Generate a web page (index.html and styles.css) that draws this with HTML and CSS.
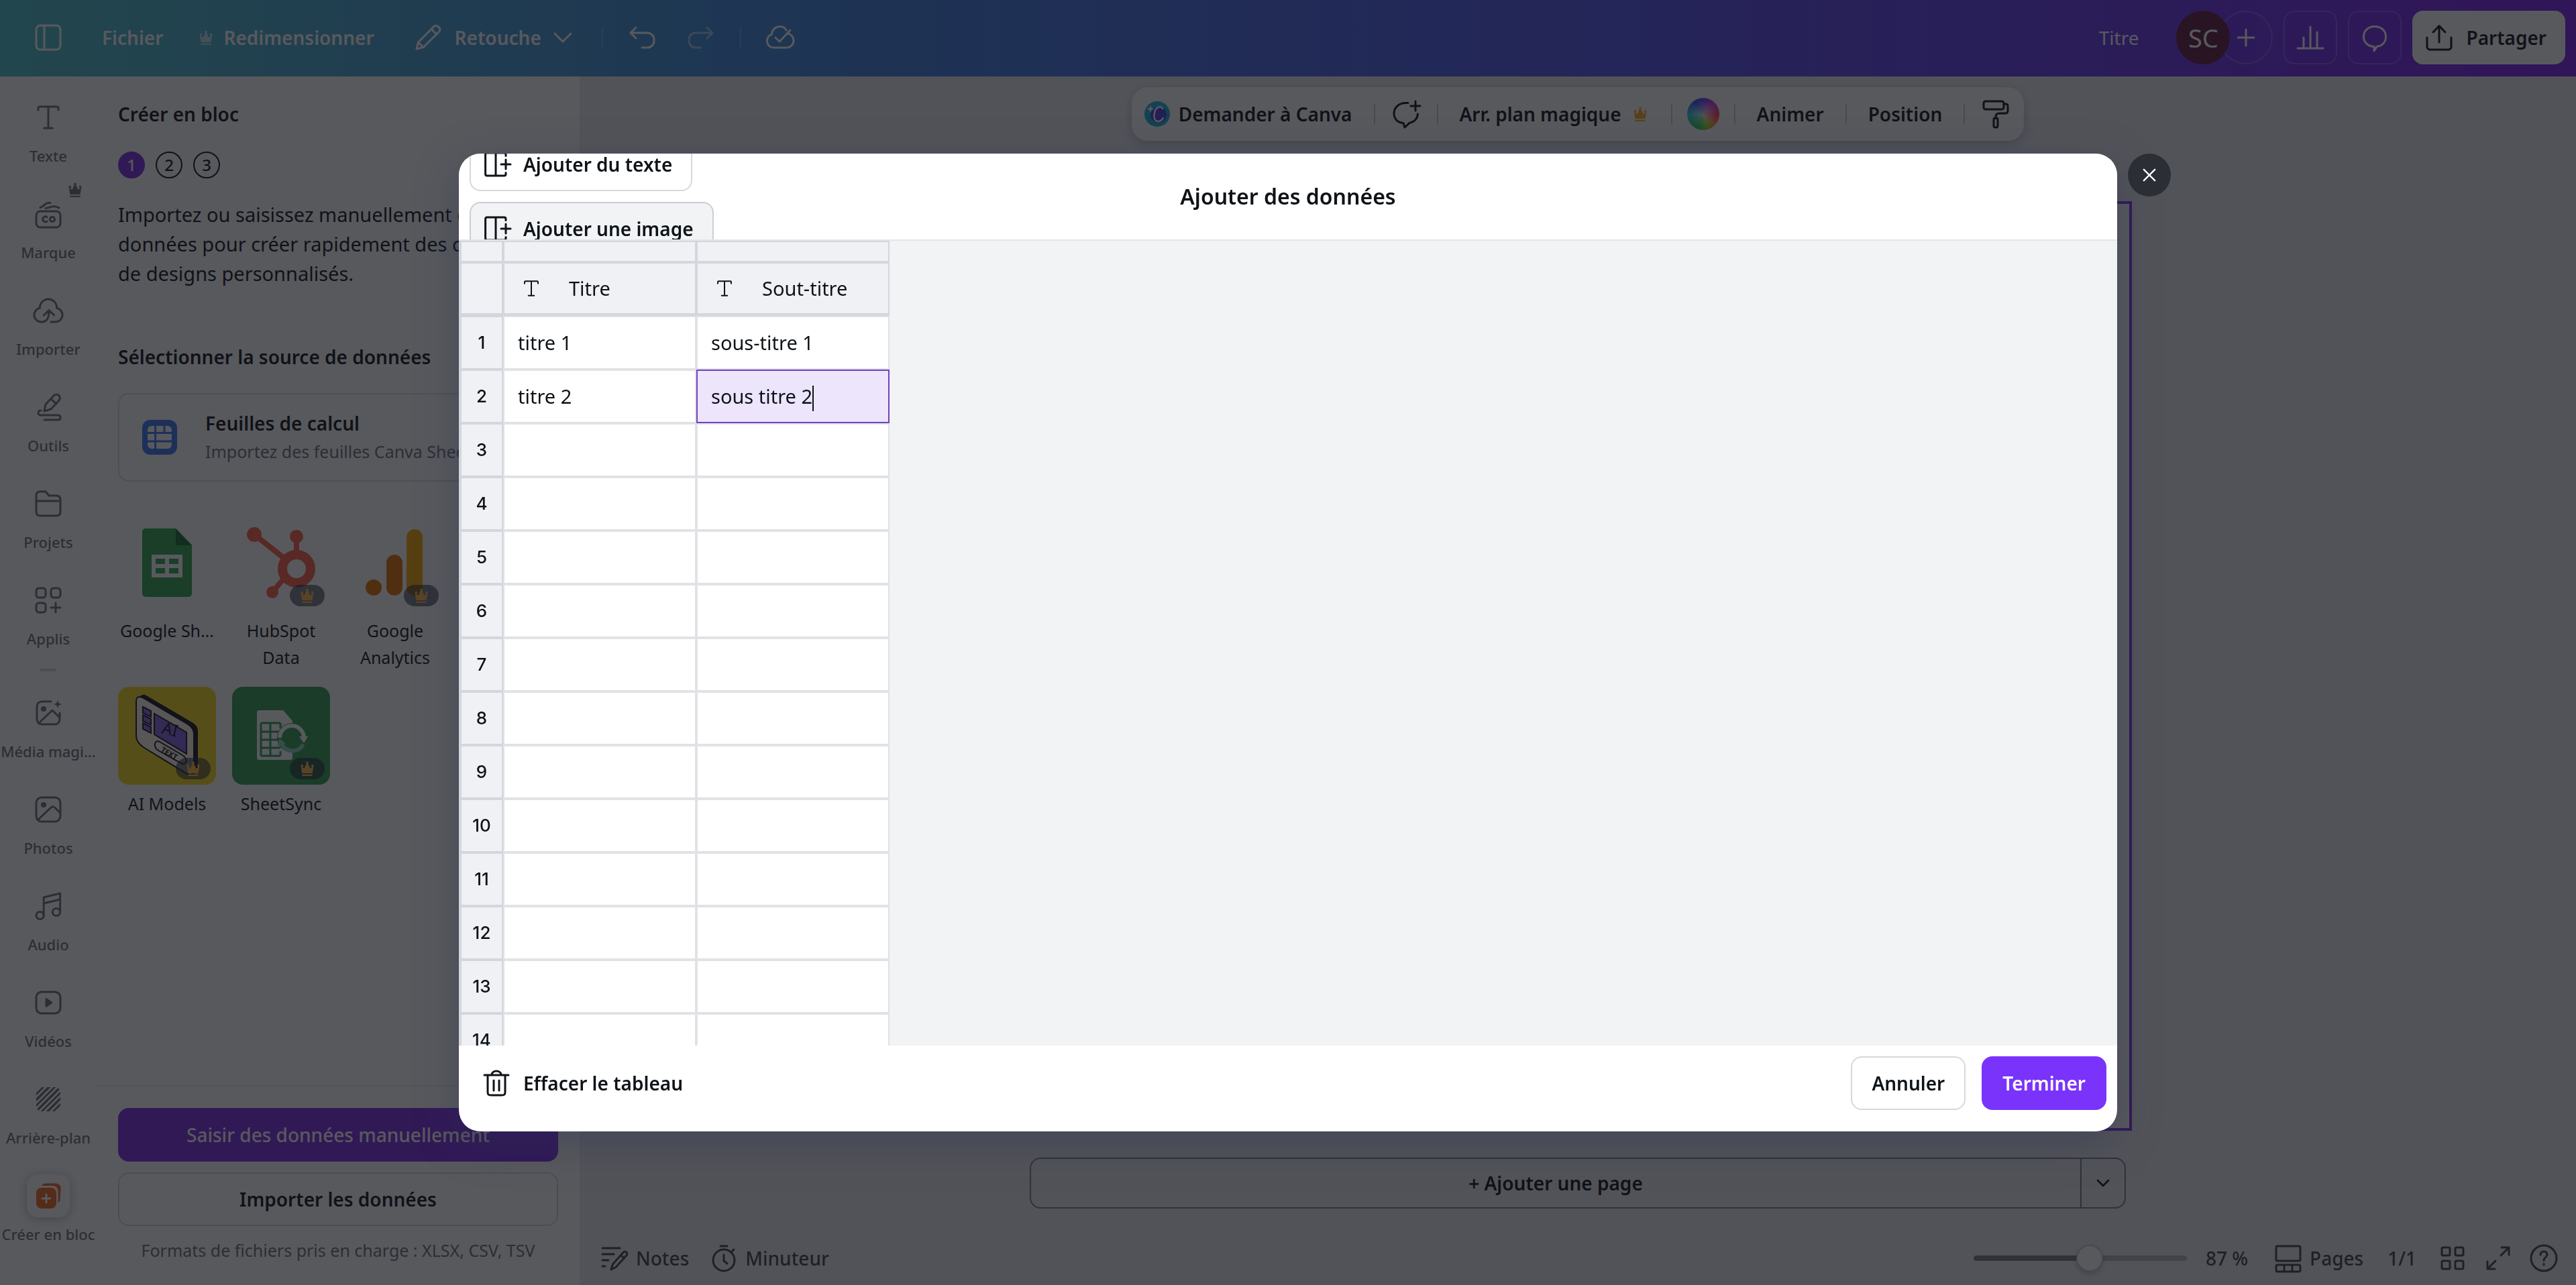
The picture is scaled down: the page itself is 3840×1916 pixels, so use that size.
FILE: index.html
```
<!DOCTYPE html>
<html lang="fr">
<head>
  <meta charset="UTF-8">
  <meta name="viewport" content="width=device-width, initial-scale=1.0">
  <title>Créer en bloc</title>
  <link rel="stylesheet" href="styles.css">
</head>
<body>
  <!-- shared icons -->
  <svg class="sprite" aria-hidden="true">
    <symbol id="i-crown" viewBox="0 0 24 24"><path d="M4 8.500a1.500 1.500 0 1 1 1.500 1.200L8 12l3-6a1.600 1.600 0 1 1 2 0l3 6 2.500-2.300A1.500 1.500 0 1 1 20 8.500L18.500 18h-13zM5.500 19.500h13v2h-13z" fill="currentColor" stroke="none"/></symbol>
    <symbol id="i-text" viewBox="0 0 24 24"><path d="M4.500 6.500V5c0-.6.400-1 1-1h13c.6 0 1 .4 1 1v1.500M12 4v16M8.800 20h6.400"/></symbol>
    <symbol id="i-chevron" viewBox="0 0 24 24"><path d="M6 9l6 6 6-6"/></symbol>
    <symbol id="i-bubble" viewBox="0 0 24 24"><path d="M12 3.800c5 0 8.300 3.200 8.300 7.600 0 4-2.800 6.900-6.800 7.400L11.500 22v-3.200c-4.500-.3-7.800-3.200-7.800-7.400C3.700 7 7 3.800 12 3.800z"/></symbol>
    <symbol id="i-column" viewBox="0 0 24 24"><path d="M19 5.800V4.700c0-.8-.4-1.200-1.200-1.200H5c-.8 0-1.200.4-1.200 1.200v14.600c0 .8.400 1.200 1.200 1.200h12.800c.8 0 1.200-.4 1.200-1.200v-1.100M11.500 3.500v17M19 8.500v7M15.500 12h7"/></symbol>
    <symbol id="i-photo" viewBox="0 0 24 24"><rect x="3" y="3" width="18" height="18" rx="4"/><circle cx="8.500" cy="8.500" r="1.300" fill="currentColor"/><path d="M4.500 19.500l9.500-9a2 2 0 0 1 2.800 0l4 4"/></symbol>
  </svg>

  <header class="topbar">
    <div class="topbar-left">
      <button class="icon-btn" aria-label="Menu"><svg class="icon" viewBox="0 0 24 24"><rect x="3" y="3" width="18" height="18" rx="3"/><path d="M9 3v18"/></svg></button>
      <button class="menu-btn file">Fichier</button>
      <button class="menu-btn resize"><svg class="icon crown"><use href="#i-crown"/></svg>Redimensionner</button>
      <button class="menu-btn edit"><svg class="icon" viewBox="0 0 24 24"><path d="M3.500 20.500l1.200-5L16.500 3.700a2 2 0 0 1 2.900 0l1 1a2 2 0 0 1 0 2.800L8.500 19.300zM14.500 5.700l3.900 3.900M4.700 15.500l3.800 3.800"/></svg>Retouche<svg class="icon chevron"><use href="#i-chevron"/></svg></button>
      <span class="sep"></span>
      <button class="icon-btn" aria-label="Annuler l'action"><svg class="icon" viewBox="0 0 24 24"><path d="M7.500 4.500L3.500 8.500l4 4M3.500 8.500h12.500a5 5 0 0 1 5 5v1a5 5 0 0 1-5 5h-4"/></svg></button>
      <button class="icon-btn dim" aria-label="Rétablir"><svg class="icon" viewBox="0 0 24 24"><path d="M16.500 4.500l4 4-4 4M20.500 8.500H8a5 5 0 0 0-5 5v1a5 5 0 0 0 5 5h4"/></svg></button>
      <span class="sep"></span>
      <button class="icon-btn" aria-label="Enregistré"><svg class="icon" viewBox="0 0 24 24"><path d="M17.500 8.700C21 10 22 12 22 14.200A5.300 5.300 0 0 1 16.800 19.500H7A5 5 0 0 1 2.200 14.500c0-2.400 1.300-4 3.400-4.800C5.800 6.200 8.500 3.800 11.700 3.800c2.200 0 4 1 5 2.800M8.500 12l3 3L19.500 6.500"/></svg></button>
    </div>
    <div class="topbar-right">
      <span class="doc-title">Titre</span>
      <div class="people">
        <span class="avatar">SC</span>
        <button class="add-person" aria-label="Ajouter un membre"><svg class="icon" viewBox="0 0 24 24"><path d="M12 6v12M6 12h12"/></svg></button>
      </div>
      <button class="square" aria-label="Statistiques"><svg class="icon" viewBox="0 0 24 24"><path d="M2.500 20h19M7 19v-7M12 19V4M17 19V8"/></svg></button>
      <button class="square" aria-label="Commentaires"><svg class="icon"><use href="#i-bubble"/></svg></button>
      <button class="share"><svg class="icon" viewBox="0 0 24 24"><path d="M3 12v7c0 1 1 2 2 2h14c1 0 2-1 2-2v-7M12 15.500V3.500M7.500 8L12 3.300 16.500 8"/></svg>Partager</button>
    </div>
  </header>

  <div class="app">
    <nav class="rail">
      <a href="#" class="rail-item"><span class="tile"><svg class="icon"><use href="#i-text"/></svg></span><span class="label">Texte</span></a>
      <a href="#" class="rail-item"><svg class="icon crown rail-crown"><use href="#i-crown"/></svg><span class="tile"><svg class="icon" viewBox="0 0 24 24"><rect x="3" y="10" width="18" height="12" rx="3"/><path d="M6 7.200C9 6.500 9.500 3 13.500 3.700M10 7.700c4-.4 6-2.700 10-.2"/><path d="M11 14.300a2 2 0 1 0 0 3.300"/><circle cx="15" cy="16" r="1.800"/></svg></span><span class="label">Marque</span></a>
      <a href="#" class="rail-item"><span class="tile"><svg class="icon" viewBox="0 0 24 24"><path d="M14 20.500h3A5.200 5.200 0 0 0 18.300 10.200 6.400 6.400 0 0 0 12 3.500a6.400 6.400 0 0 0-6.300 6.700A5.200 5.200 0 0 0 7 20.500c3.500 0 5.500-2 5.500-8M8.700 15.500l3.800-3.700 3.800 3.700"/></svg></span><span class="label">Importer</span></a>
      <a href="#" class="rail-item"><span class="tile"><svg class="icon" viewBox="0 0 24 24"><path d="M9 15l1-5 6-6.500a2.600 2.600 0 0 1 4 3.500l-6 6.500zM14 6l4 3.500M6.500 14.500h-1a2 2 0 0 0 0 3.500h14c2 0 2 3.500 0 3.500H9"/></svg></span><span class="label">Outils</span></a>
      <a href="#" class="rail-item"><span class="tile"><svg class="icon" viewBox="0 0 24 24"><path d="M3 10V6c0-2 1-3 3-3h4l2.500 3H18c2 0 3 1 3 3v9c0 2-1 3-3 3H6c-2 0-3-1-3-3zh18"/></svg></span><span class="label">Projets</span></a>
      <a href="#" class="rail-item"><span class="tile"><svg class="icon" viewBox="0 0 24 24"><rect x="3" y="3" width="7" height="7" rx="2"/><rect x="14" y="3" width="7" height="7" rx="2"/><rect x="3" y="14" width="7" height="7" rx="2"/><path d="M17.500 14v7M14 17.500h7"/></svg></span><span class="label">Applis</span></a>
      <hr class="rail-line">
      <a href="#" class="rail-item"><span class="tile"><svg class="icon" viewBox="0 0 24 24"><path d="M14 3.500H7.500c-2.500 0-4 1.500-4 4v9c0 2.500 1.500 4 4 4h9c2.500 0 4-1.500 4-4V12M5 19.500L15 10l5 5"/><circle cx="8.500" cy="9" r="1.300" fill="currentColor"/><path d="M19 2.500l.8 2.200 2.200.8-2.200.8L19 8.500l-.8-2.200-2.200-.8 2.200-.8z" fill="currentColor" stroke="none"/></svg></span><span class="label">Média magi…</span></a>
      <a href="#" class="rail-item"><span class="tile"><svg class="icon"><use href="#i-photo"/></svg></span><span class="label">Photos</span></a>
      <a href="#" class="rail-item"><span class="tile"><svg class="icon" viewBox="0 0 24 24"><circle cx="5.800" cy="19" r="2.800"/><circle cx="18" cy="16.500" r="2.800"/><path d="M8.600 19V5.500l12.200-3v14M8.600 10l12.200-3"/></svg></span><span class="label">Audio</span></a>
      <a href="#" class="rail-item"><span class="tile"><svg class="icon" viewBox="0 0 24 24"><rect x="3" y="4" width="18" height="16" rx="4"/><path d="M10.500 9.300l3.800 2.700-3.800 2.700z" fill="currentColor"/></svg></span><span class="label">Vidéos</span></a>
      <a href="#" class="rail-item"><span class="tile"><span class="hatch"></span></span><span class="label">Arrière-plan</span></a>
      <a href="#" class="rail-item"><span class="tile active"><svg class="icon" viewBox="0 0 24 24"><path d="M7 4.500C8 3 9 2.800 11 2.800h6c3 0 4.500 1.500 4.300 4.500l-.5 7c-.1 1.500-.5 2.200-1.500 3V9c0-3-1.500-4.500-4.500-4.500z" fill="#f4641e" stroke="none"/><rect x="3" y="6" width="15" height="15.500" rx="4" fill="#f4641e" stroke="none"/><path d="M10.500 11v6M7.500 14h6" stroke="#fff"/></svg></span><span class="label">Créer en bloc</span></a>
    </nav>

    <aside class="panel">
      <div class="panel-body">
        <h2 class="panel-title">Créer en bloc</h2>
        <ol class="steps">
          <li class="step current">1</li>
          <li class="step">2</li>
          <li class="step">3</li>
        </ol>
        <p class="intro">Importez ou saisissez manuellement des<br>données pour créer rapidement des centaines<br>de designs personnalisés.</p>
        <h3 class="source-title">Sélectionner la source de données</h3>
        <button class="source-card">
          <svg class="sheet-icon" viewBox="0 0 26 26"><rect x="0" y="0" width="26" height="26" rx="6" fill="#3b76f6"/><rect x="4" y="4.500" width="18" height="17" rx="3" fill="#fff"/><path d="M4 9.800h18M4 16h18M9.800 4.500v17M16.500 4.500v5.300" stroke="#3b76f6" stroke-width="1.500"/></svg>
          <span class="source-text"><strong>Feuilles de calcul</strong><span>Importez des feuilles Canva Sheets</span></span>
        </button>
        <div class="apps">
          <button class="app-card">
            <span class="app-tile"><svg viewBox="0 0 146 146"><path d="M42 22h44l24 25v72a5 5 0 0 1-5 5H41a5 5 0 0 1-5-5V27a5 5 0 0 1 6-5z" fill="#2fa34f"/><path d="M86 22l24 25H86z" fill="#13702f"/><path d="M50 61h46v34H50z" fill="#fff"/><path d="M56 67h14v8H56zM76 67h14v8H76zM56 81h14v8H56zM76 81h14v8H76z" fill="#2fa34f"/></svg></span>
            <span class="app-name one-line">Google Sheets</span>
          </button>
          <button class="app-card">
            <span class="app-tile"><svg viewBox="0 0 146 146"><g stroke="#ff5f45" fill="none" stroke-width="8"><path d="M33 31l48 38M96 34v26M60 117l16-19"/><circle cx="96" cy="82" r="21" stroke-width="14"/></g><g fill="#ff5f45"><circle cx="33" cy="31" r="11"/><circle cx="96" cy="34" r="10"/><circle cx="60" cy="117" r="9"/></g></svg><span class="badge"><svg class="icon crown"><use href="#i-crown"/></svg></span></span>
            <span class="app-name">HubSpot Data</span>
          </button>
          <button class="app-card">
            <span class="app-tile"><svg viewBox="0 0 146 146"><rect x="90" y="23" width="24" height="99" rx="12" fill="#f9ab00"/><rect x="60" y="61" width="24" height="61" rx="12" fill="#e37400"/><circle cx="41" cy="110" r="12" fill="#e37400"/></svg><span class="badge"><svg class="icon crown"><use href="#i-crown"/></svg></span></span>
            <span class="app-name">Google Analytics</span>
          </button>
          <button class="app-card">
            <span class="app-tile"><svg viewBox="0 0 146 146"><rect width="146" height="146" rx="16" fill="#f9d91c"/><path d="M30 16l6-4q3-1 6 1l70 41q7 5 7 12v60l-6 4z" fill="#15151c"/><path d="M27 22c0-7 4-9 11-5l66 39c6 4 9 8 9 14v54c0 8-4 9-10 6L39 91c-8-5-12-10-12-18z" fill="#fff4e8" stroke="#15151c" stroke-width="2"/><path d="M54 40l48 28v32L54 71z" fill="#8a63e8" stroke="#15151c" stroke-width="2"/><path d="M37 30l12 6v9l-12-6zM37 42l12 6v9l-12-6zM37 54l12 6v9l-12-6z" fill="#8a63e8" stroke="#15151c" stroke-width="2"/><path d="M62 82l34 20c9 6 6 16-2 12L60 95c-8-5-6-17 2-13z" fill="#fff4e8" stroke="#15151c" stroke-width="2"/><text class="art-big" transform="translate(64 69) rotate(14)">AI</text><text class="art-small" transform="translate(63 96) rotate(30)">TEXT</text></svg><span class="badge"><svg class="icon crown"><use href="#i-crown"/></svg></span></span>
            <span class="app-name one-line">AI Models</span>
          </button>
          <button class="app-card">
            <span class="app-tile"><svg viewBox="0 0 146 146"><rect width="146" height="146" rx="16" fill="#2f9e53"/><path d="M40 35h36l14 16v55a3 3 0 0 1-3 3H40a3 3 0 0 1-3-3V38a3 3 0 0 1 3-3z" fill="#fff"/><path d="M43 54h29M43 67h26M43 79h26M43 91h29M43 103h29M43 54v49M57 54v49M72 54v8M72 96v7" stroke="#2f9e53" stroke-width="3"/><circle cx="89" cy="76" r="22" fill="#2f9e53"/><path d="M71 76a18 18 0 0 1 36 0" fill="none" stroke="#fff" stroke-width="6"/><path d="M100 74h13l-6 10z" fill="#fff"/><path d="M106 86a18 18 0 0 1-33-3" fill="none" stroke="#8ccfc0" stroke-width="6"/><path d="M67 88l4-11 9 8z" fill="#8ccfc0"/></svg><span class="badge"><svg class="icon crown"><use href="#i-crown"/></svg></span></span>
            <span class="app-name one-line">SheetSync</span>
          </button>
        </div>
      </div>
      <div class="panel-footer">
        <button class="btn primary-deep">Saisir des données manuellement</button>
        <button class="btn outline">Importer les données</button>
        <p class="formats">Formats de fichiers pris en charge : XLSX, CSV, TSV</p>
      </div>
    </aside>

    <main class="workspace">
      <div class="toolbar">
        <button class="tool ask"><svg class="icon ask-logo" viewBox="0 0 40 40"><circle cx="20" cy="20" r="19" fill="#18b4dc" stroke="none"/><circle cx="22" cy="21" r="12" fill="#4a3fe0" stroke="none"/><path d="M28 12c-2-5-10-3-12 6-2 8 1 13 5 13 3 0 6-2 8-5" fill="none" stroke="#fff" stroke-width="2.500"/><path d="M10 7l1.500 4 4 1.500-4 1.500-1.500 4-1.500-4-4-1.500 4-1.500z" fill="#fff" stroke="none"/></svg>Demander à Canva</button>
        <span class="sep"></span>
        <button class="tool icon-tool" aria-label="Commenter"><svg class="icon" viewBox="0 0 24 24"><path d="M13.500 3.800H12C6.500 3.800 3 7.200 3 11.500c0 4 2.500 6.700 7 7.300l1 3.200 3.500-3.300c4-1 6-3.500 6.200-6.700M19 2.500v7M15.500 6h7"/></svg></button>
        <span class="sep"></span>
        <button class="tool magic">Arr. plan magique<svg class="icon crown gold"><use href="#i-crown"/></svg></button>
        <span class="sep"></span>
        <button class="tool icon-tool" aria-label="Couleur"><span class="wheel"></span></button>
        <span class="sep"></span>
        <button class="tool">Animer</button>
        <span class="sep"></span>
        <button class="tool">Position</button>
        <span class="sep"></span>
        <button class="tool icon-tool" aria-label="Copier le style"><svg class="icon" viewBox="0 0 24 24"><rect x="3" y="2.500" width="15" height="6" rx="1.500"/><path d="M18 4.500h1.500c1 0 1.500.5 1.500 1.500v3.500c0 1.500-.5 2-2 2h-4.500c-1.500 0-2.500.7-2.500 2.500v1"/><rect x="10.500" y="15" width="3" height="7" rx="1.200"/></svg></button>
      </div>
      <div class="page-frame"></div>
      <div class="add-page">
        <button class="add-main"><span>+</span> Ajouter une page</button>
        <button class="add-more" aria-label="Autres types de page"><svg class="icon small"><use href="#i-chevron"/></svg></button>
      </div>
      <footer class="statusbar">
        <div class="status-group">
          <button class="status-btn"><svg class="icon" viewBox="0 0 24 24"><path d="M3 4.500h13M3 9h8.500M3 13.500h4.500M3 18h2M9.500 20.500l1.200-4 7.800-8.800a1.500 1.500 0 0 1 2.500 2.200l-8 8.800zM17 10l2.200 2"/></svg>Notes</button>
          <button class="status-btn"><svg class="icon" viewBox="0 0 24 24"><circle cx="12" cy="13.500" r="8"/><path d="M12 9.500v4.500l2.500 2M9.500 3h5M18 7l1.500-1.500"/></svg>Minuteur</button>
        </div>
        <div class="status-group right">
          <input class="zoom-range" type="range" min="0" max="100" value="55" aria-label="Zoom">
          <span class="percent">87 %</span>
          <button class="status-btn"><svg class="icon" viewBox="0 0 24 24"><rect x="3" y="3" width="18" height="11" rx="1"/><rect x="3" y="17" width="18" height="5" rx="1"/><path d="M9 17v5M15 17v5"/></svg>Pages</button>
          <span class="page-count">1/1</span>
          <button class="icon-btn" aria-label="Grille"><svg class="icon" viewBox="0 0 24 24"><rect x="4" y="4" width="6" height="6" rx="1"/><rect x="14" y="4" width="6" height="6" rx="1"/><rect x="4" y="14" width="6" height="6" rx="1"/><rect x="14" y="14" width="6" height="6" rx="1"/></svg></button>
          <button class="icon-btn" aria-label="Plein écran"><svg class="icon" viewBox="0 0 24 24"><path d="M14.500 4H20v5.500M20 4l-6 6M9.500 20H4v-5.500M4 20l6-6"/></svg></button>
          <button class="icon-btn" aria-label="Aide"><svg class="icon" viewBox="0 0 24 24"><circle cx="12" cy="12" r="9.500"/><path d="M9.500 9.500c0-3.500 5-3.200 5-.2 0 2-2.500 2.200-2.500 4.400M12 16.300v.7"/></svg></button>
        </div>
      </footer>
    </main>
  </div>

  <div class="overlay">
    <div class="dialog" role="dialog" aria-labelledby="dialog-title">
      <div class="modal">
        <div class="modal-header">
          <div class="add-buttons">
            <button class="btn outline with-icon"><svg class="icon"><use href="#i-column"/></svg>Ajouter du texte</button>
            <button class="btn outline with-icon hovered"><svg class="icon"><use href="#i-column"/></svg>Ajouter une image</button>
          </div>
          <h1 class="modal-title" id="dialog-title">Ajouter des données</h1>
        </div>
        <div class="sheet">
          <table class="grid">
            <thead>
              <tr class="handles"><th></th><th></th><th></th></tr>
              <tr class="columns">
                <th></th>
                <th><span class="col-head"><svg class="icon small"><use href="#i-text"/></svg>Titre</span></th>
                <th><span class="col-head"><svg class="icon small"><use href="#i-text"/></svg>Sout-titre</span></th>
              </tr>
            </thead>
            <tbody>
              <tr><th>1</th><td>titre 1</td><td>sous-titre 1</td></tr>
              <tr><th>2</th><td>titre 2</td><td class="selected">sous titre 2<span class="caret"></span></td></tr>
              <tr><th>3</th><td></td><td></td></tr>
              <tr><th>4</th><td></td><td></td></tr>
              <tr><th>5</th><td></td><td></td></tr>
              <tr><th>6</th><td></td><td></td></tr>
              <tr><th>7</th><td></td><td></td></tr>
              <tr><th>8</th><td></td><td></td></tr>
              <tr><th>9</th><td></td><td></td></tr>
              <tr><th>10</th><td></td><td></td></tr>
              <tr><th>11</th><td></td><td></td></tr>
              <tr><th>12</th><td></td><td></td></tr>
              <tr><th>13</th><td></td><td></td></tr>
              <tr><th>14</th><td></td><td></td></tr>
            </tbody>
          </table>
        </div>
        <div class="modal-footer">
          <button class="btn plain with-icon"><svg class="icon" viewBox="0 0 24 24"><path d="M3 6h18M8.500 6c0-4 7-4 7 0M5.500 6v12.500c0 2 .5 2.500 2.500 2.500h8c2 0 2.500-.5 2.500-2.500V6M10 10v7.500M14 10v7.500"/></svg>Effacer le tableau</button>
          <div class="actions">
            <button class="btn outline">Annuler</button>
            <button class="btn primary">Terminer</button>
          </div>
        </div>
      </div>
      <button class="close" aria-label="Fermer"><svg class="icon small" viewBox="0 0 24 24"><path d="M5 5l14 14M19 5L5 19"/></svg></button>
    </div>
  </div>
</body>
</html>
```
FILE: styles.css
```
* {
  box-sizing: border-box;
}
body {
  margin: 0;
  height: 100vh;
  display: flex;
  flex-direction: column;
  overflow: hidden;
  background: #ebecf0;
  color: #0e1318;
  font-family: "Noto Sans", sans-serif;
  font-size: 28px;
  line-height: 44px;
}
button {
  font: inherit;
  color: inherit;
  background: none;
  border: none;
  padding: 0;
  cursor: pointer;
}
h1, h2, h3, p, ol {
  margin: 0;
  padding: 0;
}
.sprite {
  display: none;
}
.icon {
  width: 48px;
  height: 48px;
  flex: none;
  fill: none;
  stroke: currentColor;
  stroke-width: 1.5;
  stroke-linecap: round;
  stroke-linejoin: round;
}
.icon.small {
  width: 32px;
  height: 32px;
}
.icon.crown {
  width: 28px;
  height: 28px;
}
.sep {
  width: 2px;
  height: 32px;
  flex: none;
  background: currentColor;
  opacity: 0.2;
}

/* top bar */
.topbar {
  height: 114px;
  flex: none;
  display: flex;
  justify-content: space-between;
  align-items: center;
  padding: 0 16px 2px;
  color: white;
  font-weight: 600;
  background: linear-gradient(90deg, #4bc0c8, #3c81e0 33%, #5052ed 62%, #7c1bed);
}
.topbar-left, .topbar-right {
  display: flex;
  align-items: center;
}
.topbar-left {
  padding-left: 32px;
}
.icon-btn {
  display: flex;
}
.menu-btn {
  display: flex;
  align-items: center;
}
.file {
  margin-left: 56px;
}
.resize {
  margin-left: 50px;
  gap: 12px;
}
.resize .icon {
  opacity: 0.6;
}
.edit {
  margin-left: 56px;
  gap: 16px;
}
.edit .chevron {
  margin-left: -8px;
}
.topbar-left .sep {
  margin: 0 34px;
}
.dim {
  opacity: 0.5;
  margin-left: 40px;
}
.doc-title {
  font-weight: 400;
  margin-right: 56px;
}
.people {
  display: flex;
  margin-right: 16px;
}
.avatar {
  position: relative;
  z-index: 1;
  width: 80px;
  height: 80px;
  border-radius: 50%;
  background: #5e1a3c;
  font-size: 38px;
  font-weight: 400;
  line-height: 80px;
  text-align: center;
}
.add-person {
  width: 80px;
  height: 80px;
  margin-left: -16px;
  border: 2px solid #ffffff33;
  border-radius: 50%;
  display: grid;
  place-items: center;
}
.square {
  width: 80px;
  height: 80px;
  margin-right: 16px;
  border: 2px solid #ffffff33;
  border-radius: 16px;
  display: grid;
  place-items: center;
}
.share {
  height: 80px;
  padding: 0 28px 0 16px;
  border-radius: 16px;
  background: #fff;
  color: #0e1318;
  display: flex;
  align-items: center;
  gap: 16px;
}

/* left rail */
.app {
  flex: 1;
  min-height: 0;
  display: flex;
}
.rail {
  width: 144px;
  flex: none;
  padding-top: 5px;
  background: #fff;
}
.rail-item {
  position: relative;
  height: 144px;
  padding-top: 24px;
  display: flex;
  flex-direction: column;
  align-items: center;
  gap: 8px;
  color: #6c7078;
  text-decoration: none;
}
.tile {
  width: 64px;
  height: 64px;
  border-radius: 16px;
  display: grid;
  place-items: center;
}
.tile.active {
  box-shadow: 0 2px 16px #40577066;
}
.label {
  font-size: 22px;
  font-weight: 500;
  line-height: 34px;
  white-space: nowrap;
}
.rail-crown {
  position: absolute;
  top: 6px;
  right: 18px;
}
.rail-line {
  width: 24px;
  height: 4px;
  margin: 14px auto 6px;
  border: none;
  background: #d4d6dd;
}
.hatch {
  width: 36px;
  height: 36px;
  border-radius: 8px;
  background: repeating-linear-gradient(135deg, #6c7078 0 3px, #fff 3px 6px);
}

/* side panel */
.panel {
  width: 720px;
  flex: none;
  display: flex;
  flex-direction: column;
  background: #fff;
}
.panel-body {
  flex: 1;
  min-height: 0;
  padding: 34px 32px 0;
}
.panel-title, .source-title {
  font-size: 28px;
  font-weight: 600;
  line-height: 44px;
}
.steps {
  display: flex;
  gap: 16px;
  margin-top: 34px;
  list-style: none;
}
.step {
  width: 40px;
  height: 40px;
  border: 2px solid #0e1318;
  border-radius: 50%;
  font-size: 24px;
  font-weight: 500;
  line-height: 36px;
  text-align: center;
}
.step.current {
  background: #7d2ae8;
  border-color: #7d2ae8;
  color: #fff;
}
.intro {
  margin-top: 32px;
  font-size: 29px;
  white-space: nowrap;
}
.source-title {
  margin-top: 80px;
}
.source-card {
  width: 100%;
  height: 132px;
  margin-top: 32px;
  padding: 0 34px;
  border: 2px solid #dcdee3;
  border-radius: 16px;
  display: flex;
  align-items: center;
  gap: 42px;
  text-align: left;
}
.sheet-icon {
  width: 52px;
  height: 52px;
  fill: none;
}
.source-text {
  display: flex;
  flex-direction: column;
  line-height: 42px;
}
.source-text strong {
  font-weight: 600;
}
.source-text span {
  font-size: 25px;
  color: #6c7078;
}
.apps {
  display: grid;
  grid-template-columns: repeat(3, 146px);
  gap: 24px;
  margin-top: 48px;
}
.app-card {
  display: flex;
  flex-direction: column;
  align-items: center;
  gap: 8px;
}
.app-tile {
  position: relative;
  width: 146px;
  height: 146px;
}
.app-tile > svg {
  width: 146px;
  height: 146px;
  display: block;
}
.badge {
  position: absolute;
  right: 8px;
  bottom: 8px;
  width: 52px;
  height: 32px;
  border-radius: 16px;
  background: #22263a99;
  color: #ffb743;
  display: grid;
  place-items: center;
}
.art-big {
  font-size: 24px;
  fill: #15151c;
}
.art-small {
  font-size: 11px;
  font-weight: 700;
  fill: #15151c;
}
.app-name {
  width: 140px;
  font-size: 25px;
  line-height: 40px;
}
.one-line {
  overflow: hidden;
  white-space: nowrap;
  text-overflow: ellipsis;
}
.panel-footer {
  padding: 32px;
  border-top: 2px solid #eeeff2;
  display: flex;
  flex-direction: column;
  gap: 16px;
}
.formats {
  font-size: 25px;
  line-height: 40px;
  color: #6c7078;
  text-align: center;
}

/* buttons */
.btn {
  height: 80px;
  padding: 0 29px;
  border: 2px solid transparent;
  border-radius: 16px;
  font-weight: 600;
}
.outline {
  border-color: #d6d8dc;
}
.primary {
  background: #7a33fa;
  color: #fff;
}
.primary-deep {
  background: #7d2ae8;
  color: #fff;
  font-weight: 500;
}
.with-icon {
  display: flex;
  align-items: center;
  gap: 16px;
  padding: 0 28px 0 14px;
}
.plain {
  border-color: transparent;
}
.hovered {
  background: #f2f3f5;
  border-color: #cbced4;
}

/* workspace */
.workspace {
  flex: 1;
  min-width: 0;
  padding-top: 16px;
  display: flex;
  flex-direction: column;
  align-items: center;
}
.toolbar {
  height: 80px;
  flex: none;
  padding: 0 18px;
  border-radius: 24px;
  background: #fff;
  box-shadow: 0 4px 16px #40577055;
  display: flex;
  align-items: center;
}
.tool {
  height: 64px;
  padding: 0 32px;
  display: flex;
  align-items: center;
  gap: 16px;
  font-weight: 600;
}
.ask {
  padding-left: 0;
  gap: 12px;
}
.magic {
  gap: 14px;
}
.ask-logo {
  width: 40px;
  height: 40px;
}
.icon-tool {
  padding: 0 22px;
}
.icon-tool:last-child {
  padding-right: 0;
}
.gold {
  color: #ffab24;
}
.wheel {
  width: 48px;
  height: 48px;
  border-radius: 50%;
  background: radial-gradient(circle, #ffffffaa, #ffffff00 60%), conic-gradient(#6a3df0, #d53ad0 50deg, #ff3860 95deg, #ff9a30 135deg, #8be030 165deg, #28cf50 200deg, #28d0d8 270deg, #3050f0 325deg, #6a3df0);
}
.page-frame {
  flex: 1;
  width: 1652px;
  max-width: 90%;
  margin-top: 90px;
  border: 4px solid #7d2ae8;
  background: #fff;
}
.add-page {
  width: 1634px;
  max-width: 90%;
  height: 76px;
  margin-top: 40px;
  border: 2px solid #767b8c;
  border-radius: 16px;
  display: flex;
  flex: none;
}
.add-main {
  flex: 1;
  font-weight: 600;
}
.add-more {
  width: 66px;
  border-left: 2px solid #767b8c;
  display: grid;
  place-items: center;
}
.add-page .icon {
  stroke-width: 2;
}
.statusbar {
  width: 100%;
  height: 80px;
  margin-top: 34px;
  padding: 0 24px 0 28px;
  display: flex;
  justify-content: space-between;
  align-items: center;
  flex: none;
  color: #3c4048;
  font-weight: 500;
}
.status-group {
  display: flex;
  align-items: center;
  gap: 28px;
}
.status-group.right {
  gap: 20px;
}
.status-btn {
  display: flex;
  align-items: center;
  gap: 8px;
}
.zoom-range {
  -webkit-appearance: none;
  appearance: none;
  width: 318px;
  height: 8px;
  margin: 0 8px 0 0;
  border-radius: 4px;
  background: linear-gradient(90deg, #767c84 55%, #b0b4ba 55%);
}
.zoom-range::-webkit-slider-thumb {
  -webkit-appearance: none;
  width: 40px;
  height: 40px;
  border-radius: 50%;
  border: 2px solid #c8cad0;
  background: #fff;
  box-shadow: 0 4px 8px #40577055;
}
.percent {
  margin-right: 16px;
}
.page-count {
  margin: 0 10px 0 16px;
}

/* dialog */
.overlay {
  position: fixed;
  inset: 0;
  z-index: 10;
  display: flex;
  justify-content: center;
  align-items: center;
  background: rgba(17, 19, 24, 0.7);
}
.dialog {
  position: relative;
  width: calc(100vw - 1368px);
  min-width: 1200px;
  height: calc(100vh - 458px);
}
.modal {
  height: 100%;
  display: flex;
  flex-direction: column;
  overflow: hidden;
  border-radius: 32px;
  background: #fff;
  box-shadow: 0 16px 64px #2a2f5266;
}
.modal-header {
  height: 130px;
  flex: none;
  padding: 0 16px;
  display: grid;
  grid-template-columns: 1fr auto 1fr;
  align-items: center;
  align-content: center;
  overflow: hidden;
  border-bottom: 2px solid #e4e5e9;
}
.add-buttons {
  display: flex;
  flex-direction: column;
  align-items: flex-start;
  gap: 16px;
}
.modal-title {
  font-size: 32px;
  font-weight: 600;
}
.sheet {
  flex: 1;
  min-height: 0;
  overflow: hidden;
  background: #f2f3f5;
  border-left: 2px solid #d4d6dd;
}
.grid {
  table-layout: fixed;
  width: 640px;
  border-spacing: 0;
  font-size: 29px;
}
.grid th, .grid td {
  height: 80px;
  padding: 0 20px;
  border: 2px solid #e1e2e6;
  text-align: left;
  font-weight: 400;
}
.grid td {
  background: #fff;
}
.grid th {
  background: #f0f1f5;
  border-color: #d4d6dd;
}
.grid th:first-child {
  width: 64px;
  padding: 0;
  text-align: center;
}
.grid tbody th {
  font-family: Inter, sans-serif;
  font-size: 26px;
  font-weight: 500;
}
.grid .handles th {
  height: 32px;
}
.columns th {
  border-bottom-width: 4px;
}
.col-head {
  display: flex;
  align-items: center;
  gap: 40px;
  padding-left: 4px;
}
.grid .selected {
  background: #ece5fc;
  border-color: #7340c4;
}
.caret {
  display: inline-block;
  width: 2px;
  height: 38px;
  background: #0e1318;
  vertical-align: middle;
}
.modal-footer {
  flex: none;
  padding: 16px 16px 32px;
  display: flex;
  justify-content: space-between;
}
.actions {
  display: flex;
  gap: 24px;
}
.close {
  position: absolute;
  top: 0;
  left: calc(100% + 16px);
  width: 64px;
  height: 64px;
  border-radius: 50%;
  background: #2c2e35;
  color: #fff;
  display: grid;
  place-items: center;
}
.close .icon {
  width: 28px;
  height: 28px;
  stroke-width: 2;
}
```
